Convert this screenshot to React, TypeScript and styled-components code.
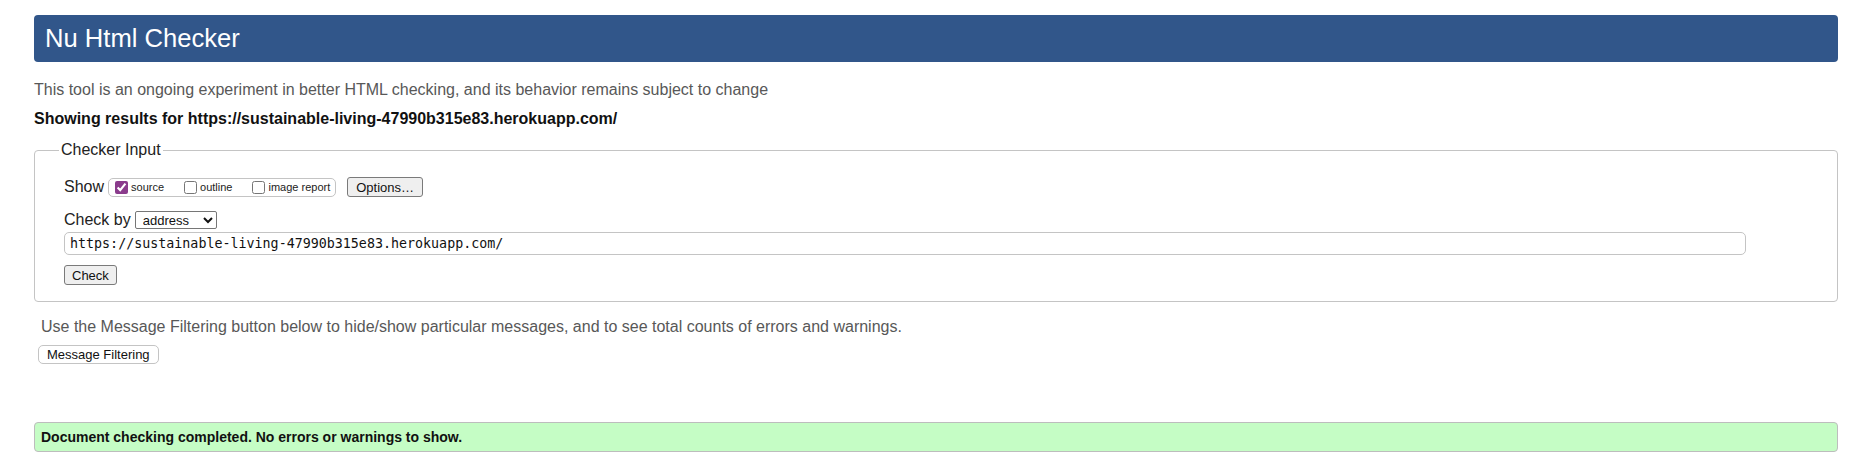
import React from "react";
import styled, { createGlobalStyle } from "styled-components";

const GlobalStyle = createGlobalStyle`
  html, body {
    margin: 0;
    padding: 0;
    background: #ffffff;
  }
  body {
    font-family: "Liberation Sans", Arial, Helvetica, sans-serif;
    color: #111;
  }
`;

const Page = styled.div`
  padding: 15px 13px 0 34px;
  display: flex;
  flex-direction: column;
`;

const Header = styled.h1`
  margin: 0;
  height: 47px;
  display: flex;
  align-items: center;
  padding-left: 11px;
  background: #31568a;
  border-radius: 4px;
  color: #ffffff;
  font-size: 25.6px;
  font-weight: normal;
`;

const Intro = styled.p`
  margin: 19px 0 0;
  font-size: 16px;
  line-height: 18px;
  color: #585858;
`;

const Showing = styled.p`
  margin: 11px 0 0;
  font-size: 16px;
  line-height: 18px;
  font-weight: bold;
  color: #111;
`;

const Fieldset = styled.fieldset`
  margin: 13px 0 0;
  padding: 0 29px 16px;
  border: 1px solid #c4c4c4;
  border-radius: 4px;
  min-width: 0;
  display: flex;
  flex-direction: column;
  align-items: flex-start;
`;

const Legend = styled.legend`
  margin-left: -5px;
  padding: 0 2px;
  font-size: 16px;
  line-height: 18px;
  color: #222;
`;

const Row = styled.div<{ $top: number }>`
  margin-top: ${(p) => p.$top}px;
  display: flex;
  align-items: center;
  height: ${(p) => (p.$top > 15 ? 20 : 18)}px;
`;

const RowLabel = styled.span`
  font-size: 16px;
  line-height: 18px;
  color: #222;
  margin-right: 4px;
`;

const OptionGroup = styled.div`
  height: 19px;
  box-sizing: border-box;
  border: 1px solid #c4c4c4;
  border-radius: 5px;
  padding: 0 5px 0 2px;
  display: flex;
  align-items: center;
`;

const OptionLabel = styled.label<{ $last?: boolean }>`
  display: flex;
  align-items: center;
  font-size: 11px;
  color: #222;
  margin-right: ${(p) => (p.$last ? 0 : 16)}px;
`;

const Checkbox = styled.input`
  width: 13px;
  height: 13px;
  margin: 0 3px 0 4px;
  accent-color: #8a3b8c;
`;

const PlainButton = styled.button<{ $ml?: number }>`
  margin-left: ${(p) => p.$ml ?? 0}px;
  height: 20px;
  box-sizing: border-box;
  padding: 0 8px;
  font-family: "Liberation Sans", Arial, sans-serif;
  font-size: 13px;
  color: #111;
  background: #efefef;
  border: 1px solid #7a7a7a;
  border-radius: 3px;
`;

const Select = styled.select`
  width: 82px;
  height: 18px;
  box-sizing: border-box;
  padding: 0 0 0 3px;
  font-family: "Liberation Sans", Arial, sans-serif;
  font-size: 13px;
  color: #111;
  background: #fff;
  border: 1px solid #767676;
  border-radius: 2px;
`;

const UrlInput = styled.input`
  margin-top: 3px;
  width: 1682px;
  height: 23px;
  box-sizing: border-box;
  padding: 0 5px;
  font-family: "DejaVu Sans Mono", "Liberation Mono", monospace;
  font-size: 13.33px;
  color: #111;
  border: 1px solid #c4c4c4;
  border-radius: 5px;
  background: #fff;
`;

const CheckButton = styled(PlainButton)`
  margin-top: 10px;
  padding: 0 7px;
`;

const FilterNote = styled.p`
  margin: 16px 0 0;
  padding-left: 7px;
  font-size: 16px;
  line-height: 18px;
  color: #585858;
`;

const FilterButton = styled.button`
  align-self: flex-start;
  margin: 9px 0 0 4px;
  height: 19px;
  box-sizing: border-box;
  padding: 0 8px;
  font-family: "Liberation Sans", Arial, sans-serif;
  font-size: 13px;
  color: #111;
  background: #ffffff;
  border: 1px solid #c4c4c4;
  border-radius: 5px;
`;

const Success = styled.div`
  margin-top: 58px;
  height: 30px;
  box-sizing: border-box;
  display: flex;
  align-items: center;
  padding-left: 6px;
  background: #c5fdc5;
  border: 1px solid #bdbdbd;
  border-radius: 4px;
  font-size: 14px;
  font-weight: bold;
  color: #111;
`;

const URL = "https://sustainable-living-47990b315e83.herokuapp.com/";

export default function App() {
  return (
    <>
      <GlobalStyle />
      <Page>
        <Header>Nu Html Checker</Header>
        <Intro>
          This tool is an ongoing experiment in better HTML checking, and its behavior remains subject to change
        </Intro>
        <Showing>Showing results for {URL}</Showing>
        <Fieldset>
          <Legend>Checker Input</Legend>
          <Row $top={18}>
            <RowLabel>Show</RowLabel>
            <OptionGroup>
              <OptionLabel>
                <Checkbox type="checkbox" defaultChecked />
                source
              </OptionLabel>
              <OptionLabel>
                <Checkbox type="checkbox" />
                outline
              </OptionLabel>
              <OptionLabel $last>
                <Checkbox type="checkbox" />
                image report
              </OptionLabel>
            </OptionGroup>
            <PlainButton type="button" $ml={11}>
              Options…
            </PlainButton>
          </Row>
          <Row $top={14}>
            <RowLabel>Check by</RowLabel>
            <Select defaultValue="address">
              <option value="address">address</option>
              <option value="file">file upload</option>
              <option value="text">text input</option>
            </Select>
          </Row>
          <UrlInput type="url" defaultValue={URL} />
          <CheckButton type="button">Check</CheckButton>
        </Fieldset>
        <FilterNote>
          Use the Message Filtering button below to hide/show particular messages, and to see total counts of errors and warnings.
        </FilterNote>
        <FilterButton type="button">Message Filtering</FilterButton>
        <Success>Document checking completed. No errors or warnings to show.</Success>
      </Page>
    </>
  );
}
